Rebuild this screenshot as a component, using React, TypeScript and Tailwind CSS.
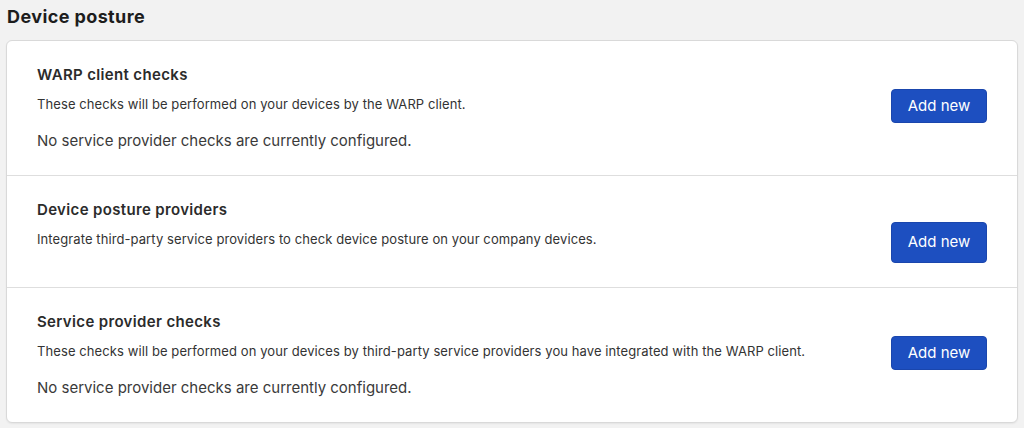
const sections = [
  {
    title: "WARP client checks",
    desc: "These checks will be performed on your devices by the WARP client.",
    empty: "No service provider checks are currently configured.",
    button: "mt-[23px] h-[34px]",
  },
  {
    title: "Device posture providers",
    desc: "Integrate third-party service providers to check device posture on your company devices.",
    button: "mt-[21px] h-[41px]",
  },
  {
    title: "Service provider checks",
    desc: "These checks will be performed on your devices by third-party service providers you have integrated with the WARP client.",
    empty: "No service provider checks are currently configured.",
    button: "mt-[23px] h-[34px]",
  },
];

export default function App() {
  return (
    <div className="min-h-[428px] bg-[#f2f2f2] pl-[6px] pr-[6px] font-['Inter','Liberation_Sans',Arial,sans-serif] text-[#313131]">
      <h1 className="pl-[1px] pt-[5px] text-[18px] font-bold leading-[24px] tracking-[0.4px] text-[#1d1d1d]">Device posture</h1>
      <div className="mt-[11px] overflow-hidden rounded-[6px] border border-[#d9d9d9] bg-white shadow-[0_1px_2px_rgba(0,0,0,0.06)]">
        {sections.map((s, i) => (
          <div
            key={s.title}
            className={`flex items-start justify-between pl-[30px] pr-[30px] pt-[25px] pb-[24px] ${i > 0 ? "border-t border-[#dedede]" : ""}`}
          >
            <div>
              <h2 className="text-[15px] font-semibold leading-[18px] tracking-[0.35px] text-[#2b2b2b]">{s.title}</h2>
              <p className="mt-[11px] text-[13px] leading-[18px] tracking-[0.09px] text-[#333]">{s.desc}</p>
              {s.empty && <p className="mt-[18px] text-[15px] leading-[20px] text-[#3a3a3a]">{s.empty}</p>}
            </div>
            <button
              type="button"
              className={`${s.button} w-[96px] shrink-0 rounded-[4px] border border-[#1a46ad] bg-[#1d4fc0] text-[15px] text-white`}
            >
              Add new
            </button>
          </div>
        ))}
      </div>
    </div>
  );
}
